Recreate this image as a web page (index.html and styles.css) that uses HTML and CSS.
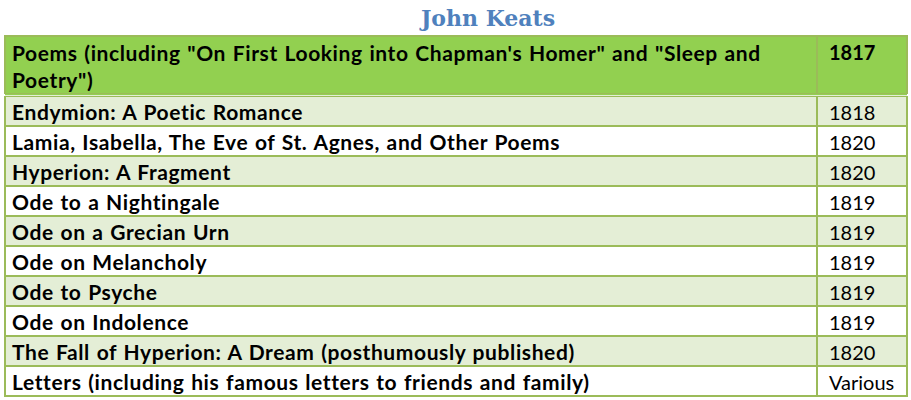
FILE: index.html
```html
<!DOCTYPE html>
<html>
<head>
<meta charset="utf-8">
<link rel="stylesheet" href="styles.css">
</head>
<body>
<div class="page">
  <h1 class="title">John Keats</h1>
  <table class="works">
    <thead>
      <tr>
        <th class="work">Poems (including "On First Looking into Chapman's Homer" and "Sleep and Poetry")</th>
        <th class="year">1817</th>
      </tr>
    </thead>
    <tbody>
      <tr class="alt"><td class="work">Endymion: A Poetic Romance</td><td class="year">1818</td></tr>
      <tr><td class="work">Lamia, Isabella, The Eve of St. Agnes, and Other Poems</td><td class="year">1820</td></tr>
      <tr class="alt"><td class="work">Hyperion: A Fragment</td><td class="year">1820</td></tr>
      <tr><td class="work">Ode to a Nightingale</td><td class="year">1819</td></tr>
      <tr class="alt"><td class="work">Ode on a Grecian Urn</td><td class="year">1819</td></tr>
      <tr><td class="work">Ode on Melancholy</td><td class="year">1819</td></tr>
      <tr class="alt"><td class="work">Ode to Psyche</td><td class="year">1819</td></tr>
      <tr><td class="work">Ode on Indolence</td><td class="year">1819</td></tr>
      <tr class="alt"><td class="work">The Fall of Hyperion: A Dream (posthumously published)</td><td class="year">1820</td></tr>
      <tr><td class="work">Letters (including his famous letters to friends and family)</td><td class="year">Various</td></tr>
    </tbody>
  </table>
</div>
</body>
</html>
```
FILE: styles.css
```css
html, body {
  margin: 0;
  padding: 0;
  background: #ffffff;
}
.page {
  padding: 0 3px 0 4px;
}
.title {
  margin: 0;
  padding: 3px 0 0 64px;
  height: 35px;
  box-sizing: border-box;
  text-align: center;
  font-family: "DejaVu Serif", "Liberation Serif", serif;
  font-weight: bold;
  font-size: 22px;
  line-height: 30px;
  color: #4f81bd;
}
.works {
  width: 904px;
  table-layout: fixed;
  border-collapse: collapse;
  font-family: Lato, "Open Sans", sans-serif;
  font-size: 21px;
  color: #000;
}
.works th, .works td {
  border: 2px solid #9bbb59;
  text-align: left;
  vertical-align: top;
  padding: 0 6px;
}
.works thead th {
  background: #92d050;
  font-weight: bold;
  line-height: 27px;
  height: 58px;
  padding-top: 2px;
  box-sizing: border-box;
}
.works thead tr {
  border-bottom: 4px double #9bbb59;
}
.works tbody td {
  height: 28px;
  line-height: 26px;
  padding-top: 2px;
  box-sizing: border-box;
}
.works td.work, .works th.work {
  letter-spacing: 0.6px;
  word-spacing: 1px;
}
.works td.work {
  font-weight: bold;
}
.works td.year, .works th.year {
  width: 90px;
  padding-left: 11px;
  font-size: 20px;
}
.works tr.alt td {
  background: #e4eed6;
}
```
